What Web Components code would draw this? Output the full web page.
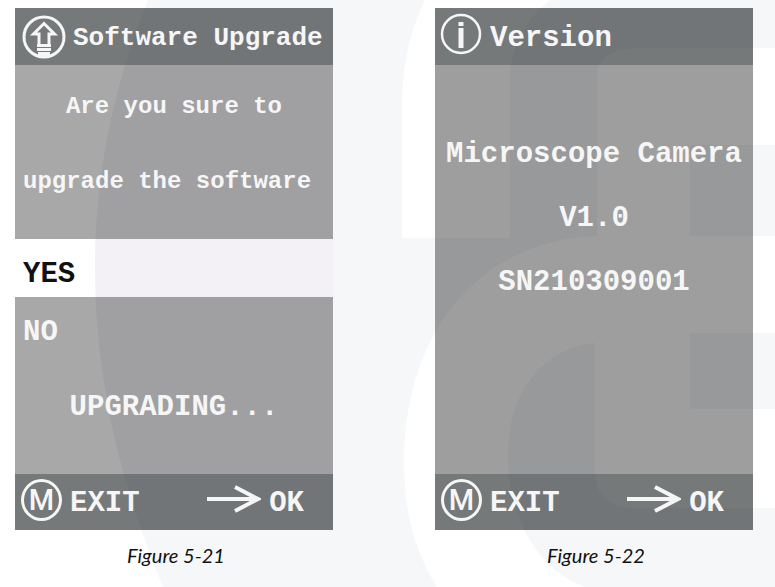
<!DOCTYPE html>
<html lang="en">
<head>
<meta charset="utf-8">
<meta name="viewport" content="width=device-width, initial-scale=1">
<title>Microscope Camera</title>
<style>
body {
    margin: 0;
    background: #fff;
}
</style>
</head>
<body>
<manual-page>
    <screen-figure caption="Figure 5-21">
        <screen-header icon="upgrade" label="Software Upgrade"></screen-header>
        <upgrade-dialog>
            <span slot="question">Are you sure to</span>
            <span slot="action">upgrade the software</span>
            <span slot="status">UPGRADING...</span>
        </upgrade-dialog>
    </screen-figure>
    <screen-figure caption="Figure 5-22">
        <screen-header icon="info" label="Version"></screen-header>
        <version-info model="Microscope Camera" version="V1.0" serial="SN210309001"></version-info>
    </screen-figure>
</manual-page>

<script>
class PageBackdrop extends HTMLElement {

    constructor() {
        super()
        this.shadowDOM = this.attachShadow({mode : "open"})
    }

    connectedCallback() {
        this.shadowDOM.innerHTML = `
            <style>
            :host {
                display: block;
            }
            svg {
                display: block;
                width: 100%;
                height: 100%;
            }
            </style>
            <svg viewBox="0 0 775 587" preserveAspectRatio="xMidYMid slice" aria-hidden="true">
                <defs>
                    <clipPath id="disc">
                        <path d="M148 0C112 90 95 180 95 267C95 380 122 490 163 587H775V0Z"/>
                    </clipPath>
                </defs>
                <g clip-path="url(#disc)">
                    <path fill="#f5f7f9" d="M0 0H775V587H0Z"/>
                    <path fill="#f3f1f6" d="M0 65H333V474H0Z"/>
                </g>
                <path fill="#fff" d="M425 0C408 35 402 70 402 110V238H510V80C510 48 525 20 550 0Z"/>
                <path fill="#fff" d="M775 48H640Q597 48 597 78V236C480 240 404 330 404 465C404 515 417 555 437 587H585C532 567 508 510 508 455C508 390 545 347 595 343V470Q595 508 635 508H775V409H690V333H775V236H690V145H775Z"/>
            </svg>
        `
    }

}
customElements.define("page-backdrop", PageBackdrop)

class ManualPage extends HTMLElement {

    constructor() {
        super()
        this.shadowDOM = this.attachShadow({mode : "open"})
    }

    connectedCallback() {
        this.shadowDOM.innerHTML = `
            <style>
            :host {
                display: block;
                position: relative;
                min-height: 100vh;
                overflow: hidden;
            }
            page-backdrop {
                position: absolute;
                inset: 0;
            }
            main {
                position: relative;
                display: grid;
                grid-template-columns: 1fr 1fr;
                gap: 102px;
                padding: 8px 22px 8px 15px;
            }
            </style>
            <page-backdrop></page-backdrop>
            <main><slot></slot></main>
        `
    }

}
customElements.define("manual-page", ManualPage)

class ScreenFigure extends HTMLElement {

    constructor() {
        super()
        this.shadowDOM = this.attachShadow({mode : "open"})
    }

    connectedCallback() {
        this.shadowDOM.innerHTML = `
            <style>
            :host {
                display: block;
                min-width: 0;
            }
            figure {
                margin: 0;
            }
            .screen {
                display: flex;
                flex-direction: column;
                color: #f6f6f6;
                font: bold 29px/33px "Liberation Mono", monospace;
            }
            figcaption {
                padding: 10px 0 0 4px;
                color: #111;
                font: italic 20px/30px Lato, sans-serif;
                text-align: center;
            }
            </style>
            <figure>
                <div class="screen">
                    <slot></slot>
                    <screen-footer></screen-footer>
                </div>
                <figcaption>${this.getAttribute("caption")}</figcaption>
            </figure>
        `
    }

}
customElements.define("screen-figure", ScreenFigure)

const headerIcons = {
    upgrade: `
        <svg width="44" height="44" viewBox="0 0 44 44" fill="none" stroke="#f6f6f6" aria-hidden="true">
            <circle cx="22" cy="22" r="20" stroke-width="3"/>
            <path stroke-width="3" d="M17 30V19H11.500L22 8.500L32.500 19H27V30"/>
            <path stroke-width="3" d="M15 30.500H29M15 34.500H29"/>
            <path stroke-width="5" d="M16 39.500H28"/>
        </svg>`,
    info: `
        <svg width="42" height="42" viewBox="0 0 42 42" fill="none" stroke="#f6f6f6" aria-hidden="true">
            <circle cx="21" cy="21" r="19" stroke-width="2.500"/>
            <path stroke-width="5" d="M21 9V13M21 15V35"/>
        </svg>`
}

class ScreenHeader extends HTMLElement {

    constructor() {
        super()
        this.shadowDOM = this.attachShadow({mode : "open"})
    }

    connectedCallback() {
        const icon = this.getAttribute("icon")
        this.shadowDOM.innerHTML = `
            <style>
            :host {
                display: block;
                background: rgba(2, 8, 10, .54);
            }
            header {
                display: flex;
                align-items: center;
                gap: 7px;
                height: 57px;
                padding-left: 7px;
            }
            header.info {
                gap: 8px;
                padding-left: 5px;
            }
            svg {
                flex: none;
            }
            .info svg {
                margin-bottom: 6px;
            }
            h1 {
                margin: 0;
                padding-top: 4px;
                font: inherit;
                white-space: nowrap;
            }
            .upgrade h1 {
                font-size: 26px;
            }
            </style>
            <header class="${icon}">
                ${headerIcons[icon]}
                <h1>${this.getAttribute("label")}</h1>
            </header>
        `
    }

}
customElements.define("screen-header", ScreenHeader)

class UpgradeDialog extends HTMLElement {

    constructor() {
        super()
        this.shadowDOM = this.attachShadow({mode : "open"})
    }

    connectedCallback() {
        this.shadowDOM.innerHTML = `
            <style>
            :host {
                display: block;
            }
            .message {
                padding: 4px 8px 20px;
                background: rgba(0, 0, 0, .34);
                font-size: 24px;
                line-height: 75px;
                text-align: center;
            }
            p {
                margin: 0;
                white-space: nowrap;
            }
            .message p:last-child {
                text-align: left;
            }
            button {
                display: block;
                width: 100%;
                padding: 19px 8px 6px;
                border: 0;
                background: none;
                color: inherit;
                font: inherit;
                text-align: left;
            }
            .selected {
                color: #111;
            }
            .rest {
                padding-bottom: 50px;
                background: rgba(0, 0, 0, .34);
            }
            .status {
                padding-top: 36px;
                text-align: center;
            }
            </style>
            <div class="message">
                <p><slot name="question"></slot></p>
                <p><slot name="action"></slot></p>
            </div>
            <button type="button" class="selected">YES</button>
            <div class="rest">
                <button type="button">NO</button>
                <p class="status"><slot name="status"></slot></p>
            </div>
        `
    }

}
customElements.define("upgrade-dialog", UpgradeDialog)

class VersionInfo extends HTMLElement {

    constructor() {
        super()
        this.shadowDOM = this.attachShadow({mode : "open"})
    }

    connectedCallback() {
        this.shadowDOM.innerHTML = `
            <style>
            :host {
                display: block;
                flex: 1;
                padding: 58px 0 159px;
                background: rgba(0, 0, 0, .38);
                line-height: 64px;
                text-align: center;
            }
            p {
                margin: 0;
                white-space: nowrap;
            }
            </style>
            <p>${this.getAttribute("model")}</p>
            <p>${this.getAttribute("version")}</p>
            <p>${this.getAttribute("serial")}</p>
        `
    }

}
customElements.define("version-info", VersionInfo)

class ScreenFooter extends HTMLElement {

    constructor() {
        super()
        this.shadowDOM = this.attachShadow({mode : "open"})
    }

    connectedCallback() {
        this.shadowDOM.innerHTML = `
            <style>
            :host {
                display: block;
                background: rgba(2, 8, 10, .54);
            }
            footer {
                display: flex;
                justify-content: space-between;
                height: 56px;
                padding: 0 29px 0 6px;
            }
            button {
                display: flex;
                align-items: center;
                gap: 8px;
                padding: 0;
                border: 0;
                background: none;
                color: inherit;
                font: inherit;
            }
            .key {
                box-sizing: border-box;
                width: 41px;
                height: 42px;
                margin-bottom: 4px;
                border: 3px solid #f6f6f6;
                border-radius: 50%;
                font: 500 29px/36px Roboto, sans-serif;
                text-align: center;
            }
            .label {
                padding-top: 2px;
            }
            svg {
                margin-bottom: 6px;
            }
            </style>
            <footer>
                <button type="button"><span class="key">M</span><span class="label">EXIT</span></button>
                <button type="button">
                    <svg width="54" height="30" viewBox="0 0 54 30" fill="none" stroke="#f6f6f6" stroke-width="4" aria-hidden="true">
                        <path d="M0 15H51M28 3L51 15L28 27"/>
                    </svg>
                    <span class="label">OK</span>
                </button>
            </footer>
        `
    }

}
customElements.define("screen-footer", ScreenFooter)
</script>
</body>
</html>
